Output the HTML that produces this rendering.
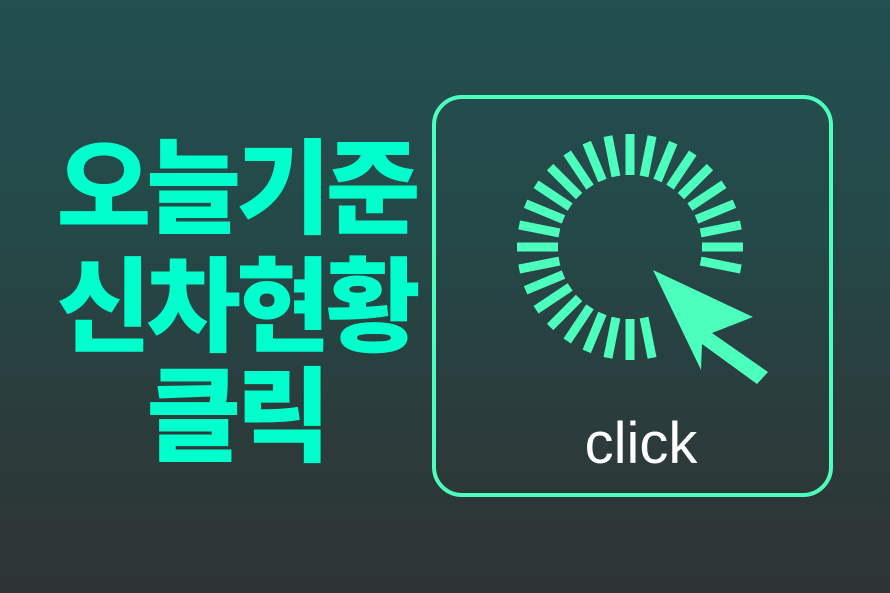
<!DOCTYPE html>
<html><head><meta charset="utf-8"><style>
html,body{margin:0;padding:0}
body{width:890px;height:593px;overflow:hidden;background:linear-gradient(#224f50 0%,#254848 40%,#2b3c3c 70%,#2e3434 100%);position:relative;font-family:"Liberation Sans","Noto Sans CJK KR",sans-serif}
.k{position:absolute;left:0;width:472px;text-align:center;color:#00ffcc;font-family:"Noto Sans CJK KR","NanumGothic",sans-serif;font-weight:900;font-size:103px;line-height:110px;letter-spacing:-5px;white-space:nowrap}
svg{position:absolute;left:0;top:0}
.c{position:absolute;left:541px;width:200px;text-align:center;top:411px;color:#fff;font-size:58px;line-height:66px}
</style></head><body>
<div class="k" style="top:126px">오늘기준</div>
<div class="k" style="top:244px">신차현황</div>
<div class="k" style="top:354px">클릭</div>
<svg width="890" height="593" viewBox="0 0 890 593">
<rect x="434" y="97" width="397" height="398" rx="28" fill="none" stroke="#4dffbd" stroke-width="4"/>
<g stroke="#4dffbd" stroke-width="9" id="ticks"></g>
<polygon points="653,270 753,317 712,333 768,372 757,384 702,344 701,370" fill="#4dffbd"/>
</svg>
<div class="c">click</div>
<script>
var g=document.getElementById('ticks'),s='';
for(var k=0;k<32;k++){if(k>=2&&k<=6)continue;var a=k*11.25*Math.PI/180,c=Math.cos(a),n=Math.sin(a);
s+='<line x1="'+(630+72*c)+'" y1="'+(247+72*n)+'" x2="'+(630+113*c)+'" y2="'+(247+113*n)+'"/>';}
g.innerHTML=s;
</script>
</body></html>
